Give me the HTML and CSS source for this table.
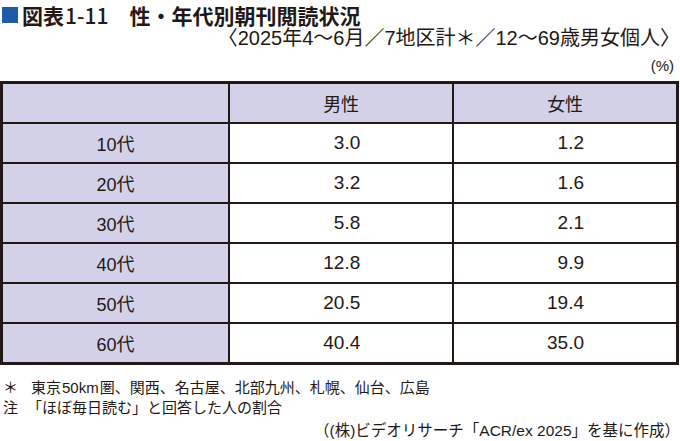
FILE: index.html
```html
<!DOCTYPE html>
<html lang="ja">
<head>
<meta charset="utf-8">
<link rel="stylesheet" href="styles.css">
</head>
<body>
<div class="page">
  <h1 class="title"><span class="mark"></span><span class="title-text">図表<span class="num">1-11</span>　性・年代別朝刊閲読状況</span></h1>
  <p class="subtitle">〈2025年4〜6月／7地区計＊／12〜69歳男女個人〉</p>
  <p class="unit">(%)</p>
  <table class="data">
    <thead>
      <tr><th class="label"></th><th>男性</th><th>女性</th></tr>
    </thead>
    <tbody>
      <tr><th class="label">10代</th><td>3.0</td><td>1.2</td></tr>
      <tr><th class="label">20代</th><td>3.2</td><td>1.6</td></tr>
      <tr><th class="label">30代</th><td>5.8</td><td>2.1</td></tr>
      <tr><th class="label">40代</th><td>12.8</td><td>9.9</td></tr>
      <tr><th class="label">50代</th><td>20.5</td><td>19.4</td></tr>
      <tr><th class="label">60代</th><td>40.4</td><td>35.0</td></tr>
    </tbody>
  </table>
  <div class="notes">
    <div class="note"><span class="key">＊</span><span>東京<span class="sp">50km</span>圏、関西、名古屋、北部九州、札幌、仙台、広島</span></div>
    <div class="note"><span class="key">注</span><span class="tight">「ほぼ毎日読む」と回答した人の割合</span></div>
  </div>
  <p class="source">（(株)ビデオリサーチ「ACR/ex 2025」を基に作成）</p>
</div>
</body>
</html>
```
FILE: styles.css
```css
html, body {
  margin: 0;
  padding: 0;
  background: #ffffff;
}
body {
  font-family: "Liberation Sans", "Noto Sans CJK JP", sans-serif;
  color: #231815;
}
.page {
  width: 680px;
  height: 441px;
  overflow: hidden;
}
.title {
  margin: 0;
  padding-top: 3px;
  display: flex;
  align-items: center;
  height: 24px;
  font-size: 21px;
  font-weight: bold;
  font-family: "Noto Sans CJK JP", sans-serif;
  line-height: 24px;
  white-space: nowrap;
}
.title .num {
  font-family: "Noto Sans CJK JP", sans-serif;
  font-weight: 500;
  margin-left: 1px;
}
.mark {
  display: inline-block;
  width: 16px;
  height: 16px;
  margin: 0 4px 0 2px;
  background: #1f5aa8;
}
.subtitle {
  margin: 0;
  height: 23px;
  line-height: 23px;
  font-size: 20px;
  text-align: right;
  padding-right: 0;
  white-space: nowrap;
}
.unit {
  margin: 0;
  height: 31px;
  line-height: 32px;
  font-size: 15px;
  text-align: right;
  padding-right: 6px;
}
.data {
  border-collapse: collapse;
  width: 679px;
  table-layout: fixed;
  border: 3px solid #231815;
  font-size: 18px;
}
.data th, .data td {
  border: 2px solid #231815;
  height: 38px;
  padding: 0;
  font-weight: normal;
}
.data th {
  background: #d3d1ea;
  text-align: center;
}
.data th.label {
  width: 225px;
}
.data td {
  text-align: right;
  padding-right: 92px;
  font-size: 19px;
}
.data tbody tr > td:nth-child(2) {
  width: 226px;
}
.notes {
  margin-top: 13px;
  font-size: 15px;
  line-height: 20px;
}
.note {
  display: flex;
}
.key {
  width: 31px;
  padding-left: 3px;
  box-sizing: border-box;
  flex: none;
}
.sp {
  margin: 0 1px;
}
.tight {
  margin-left: -4px;
}
.source {
  margin: 2px 0 0;
  font-size: 15.5px;
  line-height: 22px;
  text-align: right;
  padding-right: 0;
  white-space: nowrap;
}
```
